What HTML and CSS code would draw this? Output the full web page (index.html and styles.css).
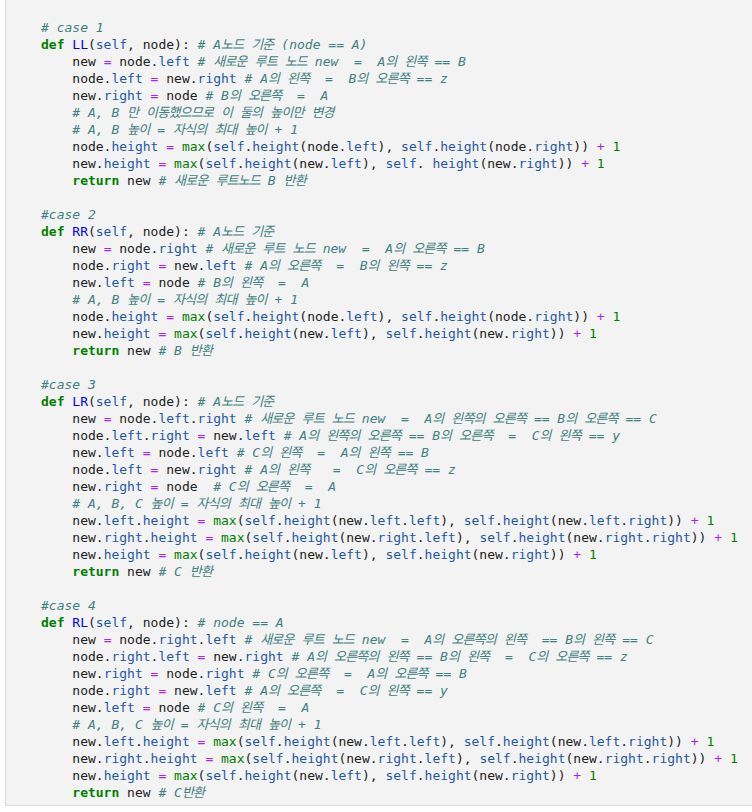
FILE: index.html
```html
<!DOCTYPE html>
<html lang="ko">
<head>
<meta charset="utf-8">
<title>AVL rotations</title>
<link rel="stylesheet" href="styles.css">
</head>
<body>
<div class="cell"><pre class="code"><span class="c"># case 1</span>
<span class="k">def</span> <span class="f">LL</span>(<span class="v">self</span>, node): <span class="c"># A<span class="h">노드</span> <span class="h">기준</span> (node == A)</span>
    new <span class="o">=</span> node.<span class="v">left</span> <span class="c"># <span class="h">새로운</span> <span class="h">루트</span> <span class="h">노드</span> new  =  A<span class="h">의</span> <span class="h">왼쪽</span> == B</span>
    node.<span class="v">left</span> <span class="o">=</span> new.<span class="v">right</span> <span class="c"># A<span class="h">의</span> <span class="h">왼쪽</span>  =  B<span class="h">의</span> <span class="h">오른쪽</span> == z</span>
    new.<span class="v">right</span> <span class="o">=</span> node <span class="c"># B<span class="h">의</span> <span class="h">오른쪽</span>  =  A</span>
    <span class="c"># A, B <span class="h">만</span> <span class="h">이동했으므로</span> <span class="h">이</span> <span class="h">둘의</span> <span class="h">높이만</span> <span class="h">변경</span></span>
    <span class="c"># A, B <span class="h">높이</span> = <span class="h">자식의</span> <span class="h">최대</span> <span class="h">높이</span> + 1</span>
    node.<span class="v">height</span> <span class="o">=</span> <span class="b">max</span>(<span class="v">self</span>.<span class="v">height</span>(node.<span class="v">left</span>), <span class="v">self</span>.<span class="v">height</span>(node.<span class="v">right</span>)) <span class="o">+</span> <span class="n">1</span>
    new.<span class="v">height</span> <span class="o">=</span> <span class="b">max</span>(<span class="v">self</span>.<span class="v">height</span>(new.<span class="v">left</span>), <span class="v">self</span>. <span class="v">height</span>(new.<span class="v">right</span>)) <span class="o">+</span> <span class="n">1</span>
    <span class="k">return</span> new <span class="c"># <span class="h">새로운</span> <span class="h">루트노드</span> B <span class="h">반환</span></span>

<span class="c">#case 2</span>
<span class="k">def</span> <span class="f">RR</span>(<span class="v">self</span>, node): <span class="c"># A<span class="h">노드</span> <span class="h">기준</span></span>
    new <span class="o">=</span> node.<span class="v">right</span> <span class="c"># <span class="h">새로운</span> <span class="h">루트</span> <span class="h">노드</span> new  =  A<span class="h">의</span> <span class="h">오른쪽</span> == B</span>
    node.<span class="v">right</span> <span class="o">=</span> new.<span class="v">left</span> <span class="c"># A<span class="h">의</span> <span class="h">오른쪽</span>  =  B<span class="h">의</span> <span class="h">왼쪽</span> == z</span>
    new.<span class="v">left</span> <span class="o">=</span> node <span class="c"># B<span class="h">의</span> <span class="h">왼쪽</span>  =  A</span>
    <span class="c"># A, B <span class="h">높이</span> = <span class="h">자식의</span> <span class="h">최대</span> <span class="h">높이</span> + 1</span>
    node.<span class="v">height</span> <span class="o">=</span> <span class="b">max</span>(<span class="v">self</span>.<span class="v">height</span>(node.<span class="v">left</span>), <span class="v">self</span>.<span class="v">height</span>(node.<span class="v">right</span>)) <span class="o">+</span> <span class="n">1</span>
    new.<span class="v">height</span> <span class="o">=</span> <span class="b">max</span>(<span class="v">self</span>.<span class="v">height</span>(new.<span class="v">left</span>), <span class="v">self</span>.<span class="v">height</span>(new.<span class="v">right</span>)) <span class="o">+</span> <span class="n">1</span>
    <span class="k">return</span> new <span class="c"># B <span class="h">반환</span></span>

<span class="c">#case 3</span>
<span class="k">def</span> <span class="f">LR</span>(<span class="v">self</span>, node): <span class="c"># A<span class="h">노드</span> <span class="h">기준</span></span>
    new <span class="o">=</span> node.<span class="v">left</span>.<span class="v">right</span> <span class="c"># <span class="h">새로운</span> <span class="h">루트</span> <span class="h">노드</span> new  =  A<span class="h">의</span> <span class="h">왼쪽의</span> <span class="h">오른쪽</span> == B<span class="h">의</span> <span class="h">오른쪽</span> == C</span>
    node.<span class="v">left</span>.<span class="v">right</span> <span class="o">=</span> new.<span class="v">left</span> <span class="c"># A<span class="h">의</span> <span class="h">왼쪽의</span> <span class="h">오른쪽</span> == B<span class="h">의</span> <span class="h">오른쪽</span>  =  C<span class="h">의</span> <span class="h">왼쪽</span> == y</span>
    new.<span class="v">left</span> <span class="o">=</span> node.<span class="v">left</span> <span class="c"># C<span class="h">의</span> <span class="h">왼쪽</span>  =  A<span class="h">의</span> <span class="h">왼쪽</span> == B</span>
    node.<span class="v">left</span> <span class="o">=</span> new.<span class="v">right</span> <span class="c"># A<span class="h">의</span> <span class="h">왼쪽</span>   =  C<span class="h">의</span> <span class="h">오른쪽</span> == z</span>
    new.<span class="v">right</span> <span class="o">=</span> node  <span class="c"># C<span class="h">의</span> <span class="h">오른쪽</span>  =  A</span>
    <span class="c"># A, B, C <span class="h">높이</span> = <span class="h">자식의</span> <span class="h">최대</span> <span class="h">높이</span> + 1</span>
    new.<span class="v">left</span>.<span class="v">height</span> <span class="o">=</span> <span class="b">max</span>(<span class="v">self</span>.<span class="v">height</span>(new.<span class="v">left</span>.<span class="v">left</span>), <span class="v">self</span>.<span class="v">height</span>(new.<span class="v">left</span>.<span class="v">right</span>)) <span class="o">+</span> <span class="n">1</span>
    new.<span class="v">right</span>.<span class="v">height</span> <span class="o">=</span> <span class="b">max</span>(<span class="v">self</span>.<span class="v">height</span>(new.<span class="v">right</span>.<span class="v">left</span>), <span class="v">self</span>.<span class="v">height</span>(new.<span class="v">right</span>.<span class="v">right</span>)) <span class="o">+</span> <span class="n">1</span>
    new.<span class="v">height</span> <span class="o">=</span> <span class="b">max</span>(<span class="v">self</span>.<span class="v">height</span>(new.<span class="v">left</span>), <span class="v">self</span>.<span class="v">height</span>(new.<span class="v">right</span>)) <span class="o">+</span> <span class="n">1</span>
    <span class="k">return</span> new <span class="c"># C <span class="h">반환</span></span>

<span class="c">#case 4</span>
<span class="k">def</span> <span class="f">RL</span>(<span class="v">self</span>, node): <span class="c"># node == A</span>
    new <span class="o">=</span> node.<span class="v">right</span>.<span class="v">left</span> <span class="c"># <span class="h">새로운</span> <span class="h">루트</span> <span class="h">노드</span> new  =  A<span class="h">의</span> <span class="h">오른쪽의</span> <span class="h">왼쪽</span>  == B<span class="h">의</span> <span class="h">왼쪽</span> == C</span>
    node.<span class="v">right</span>.<span class="v">left</span> <span class="o">=</span> new.<span class="v">right</span> <span class="c"># A<span class="h">의</span> <span class="h">오른쪽의</span> <span class="h">왼쪽</span> == B<span class="h">의</span> <span class="h">왼쪽</span>  =  C<span class="h">의</span> <span class="h">오른쪽</span> == z</span>
    new.<span class="v">right</span> <span class="o">=</span> node.<span class="v">right</span> <span class="c"># C<span class="h">의</span> <span class="h">오른쪽</span>  =  A<span class="h">의</span> <span class="h">오른쪽</span> == B</span>
    node.<span class="v">right</span> <span class="o">=</span> new.<span class="v">left</span> <span class="c"># A<span class="h">의</span> <span class="h">오른쪽</span>  =  C<span class="h">의</span> <span class="h">왼쪽</span> == y</span>
    new.<span class="v">left</span> <span class="o">=</span> node <span class="c"># C<span class="h">의</span> <span class="h">왼쪽</span>  =  A</span>
    <span class="c"># A, B, C <span class="h">높이</span> = <span class="h">자식의</span> <span class="h">최대</span> <span class="h">높이</span> + 1</span>
    new.<span class="v">left</span>.<span class="v">height</span> <span class="o">=</span> <span class="b">max</span>(<span class="v">self</span>.<span class="v">height</span>(new.<span class="v">left</span>.<span class="v">left</span>), <span class="v">self</span>.<span class="v">height</span>(new.<span class="v">left</span>.<span class="v">right</span>)) <span class="o">+</span> <span class="n">1</span>
    new.<span class="v">right</span>.<span class="v">height</span> <span class="o">=</span> <span class="b">max</span>(<span class="v">self</span>.<span class="v">height</span>(new.<span class="v">right</span>.<span class="v">left</span>), <span class="v">self</span>.<span class="v">height</span>(new.<span class="v">right</span>.<span class="v">right</span>)) <span class="o">+</span> <span class="n">1</span>
    new.<span class="v">height</span> <span class="o">=</span> <span class="b">max</span>(<span class="v">self</span>.<span class="v">height</span>(new.<span class="v">left</span>), <span class="v">self</span>.<span class="v">height</span>(new.<span class="v">right</span>)) <span class="o">+</span> <span class="n">1</span>
    <span class="k">return</span> new <span class="c"># C<span class="h">반환</span></span></pre></div>
</body>
</html>
```

FILE: styles.css
```css
html, body {
  margin: 0;
  padding: 0;
  background: #ffffff;
}

.cell {
  margin-left: 5px;
  border-left: 1px solid #dcdcdc;
  border-bottom: 1px solid #dcdcdc;
  background: #f3f3f3;
  padding: 19px 0 4px 35px;
  overflow: hidden;
}

.code {
  margin: 0;
  font-family: "DejaVu Sans Mono", "Noto Sans CJK KR", monospace;
  font-size: 13px;
  line-height: 17px;
  color: #212121;
  white-space: pre;
}

.k {
  color: #008000;
  font-weight: bold;
}

.f {
  color: #0000ff;
}

.v {
  color: #1f57a4;
}

.o {
  color: #aa22ff;
}

.n {
  color: #008000;
}

.b {
  color: #008000;
}

.c {
  color: #408080;
  font-style: italic;
}

.h {
  letter-spacing: -0.8px;
}
```
